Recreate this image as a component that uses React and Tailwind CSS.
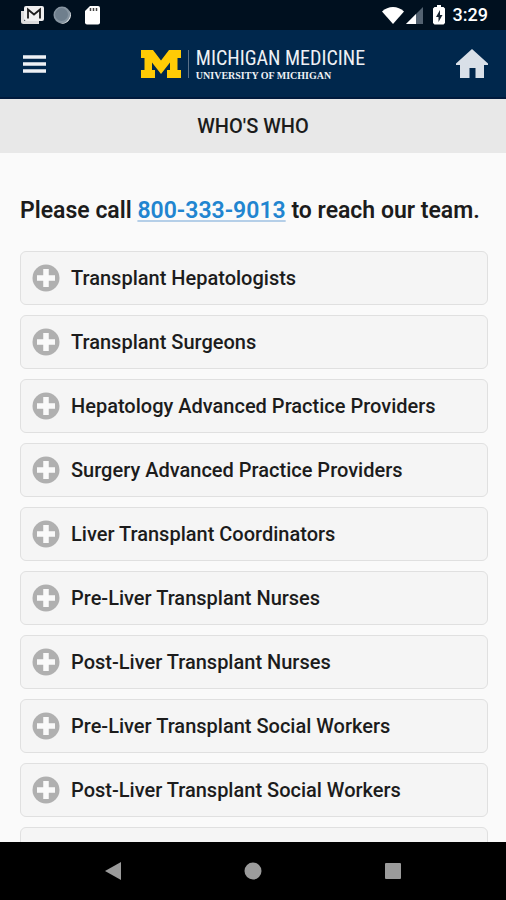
import React from 'react';

const teams = [
  'Transplant Hepatologists',
  'Transplant Surgeons',
  'Hepatology Advanced Practice Providers',
  'Surgery Advanced Practice Providers',
  'Liver Transplant Coordinators',
  'Pre-Liver Transplant Nurses',
  'Post-Liver Transplant Nurses',
  'Pre-Liver Transplant Social Workers',
  'Post-Liver Transplant Social Workers',
  '',
];

const StatusBar = () => (
  <div className="flex h-[30px] shrink-0 items-center justify-between bg-[#00101f] pr-[18px] pl-5">
    <div className="flex items-center">
      <svg className="h-5 w-6" viewBox="0 0 24 20" aria-hidden="true">
        <path d="M1 6h3v10h15v3H3.500a2.500 2.500 0 0 1-2.500-2.500z" fill="#dcdcdc" />
        <rect x="4" y="1" width="20" height="15" rx="2" fill="#efefef" />
        <path d="M8 13.500V4.500l6 5 6-5v9" fill="none" stroke="#1c1c1c" strokeWidth="1.800" />
      </svg>
      <svg className="ml-2 h-5 w-5" viewBox="0 0 20 20" aria-hidden="true">
        <circle cx="10" cy="10" r="8.500" fill="#8795a1" />
        <path d="M17 5a8.500 8.500 0 0 1-10 13 9 9 0 0 0 10-13z" fill="#e4e8ea" />
        <circle cx="9.500" cy="9.500" r="6.500" fill="#6f7f8d" />
      </svg>
      <svg className="ml-3 h-5 w-4" viewBox="0 0 16 20" aria-hidden="true">
        <path d="M6 1h8a2 2 0 0 1 2 2v14.500a2 2 0 0 1-2 2H3a2 2 0 0 1-2-2V6z" fill="#fff" />
        <path d="M6.500 3v3M9.500 3v3M12.500 3v3" stroke="#444" strokeWidth="1.500" />
      </svg>
    </div>
    <div className="flex items-center">
      <svg className="h-5 w-6" viewBox="0 0 24 20" aria-hidden="true">
        <path d="M12 19L1 6.500C4 3.500 8 2 12 2s8 1.500 11 4.500z" fill="#fff" />
      </svg>
      <svg className="h-5 w-5" viewBox="0 0 20 20" aria-hidden="true">
        <path d="M1 19L18 2v17z" fill="#536271" />
        <path d="M1 19L11 9v10z" fill="#fff" />
      </svg>
      <svg className="ml-2 h-5 w-3" viewBox="0 0 12 20" aria-hidden="true">
        <path d="M4 0h4v2h2.500L12 3.500V18l-1.500 1.500h-9L0 18V3.500L1.500 2H4z" fill="#fff" />
        <path d="M7 5L3 12h2.500v5l4-7H7z" fill="#172432" />
      </svg>
      <span className="ml-2 text-lg font-medium text-white">3:29</span>
    </div>
  </div>
);

const Header = () => (
  <header className="flex h-[69px] shrink-0 items-center justify-between border-b-2 border-[#001a3c] bg-[#00274c] pr-4 pl-5">
    <button type="button" aria-label="Menu" className="flex h-8 w-8 items-center">
      <svg className="h-6 w-7" viewBox="0 0 28 24" aria-hidden="true">
        <path d="M3 5h23M3 12h23M3 19h23" stroke="#eef1f5" strokeWidth="3.500" />
      </svg>
    </button>
    <div className="flex items-center">
      <svg className="h-7 w-10" viewBox="0 0 40 28" aria-hidden="true">
        <path
          d="M0 0h12l8 10.500L28 0h12v8h-3.500v12H40v8H26v-8h3v-7.500L20 24l-9-11.500V20h3v8H0v-8h3.500V8H0z"
          fill="#ffcb05"
        />
      </svg>
      <div className="mx-[7px] h-7 w-px bg-[#5a7189]" />
      <div className="flex flex-col text-[#eef1f5]">
        <span className="font-['Roboto_Condensed','Roboto',sans-serif] text-xl leading-6">
          MICHIGAN MEDICINE
        </span>
        <span className="font-['Liberation_Serif',serif] text-[10px] leading-3 font-bold">
          UNIVERSITY OF MICHIGAN
        </span>
      </div>
    </div>
    <a href="#home" aria-label="Home">
      <svg className="h-8 w-9" viewBox="0 0 36 32" aria-hidden="true">
        <path d="M18 1l16 14.500V17h-4v13h-8.500V20h-6v10H6V17H2v-1.500z" fill="#d9e0e8" />
      </svg>
    </a>
  </header>
);

const PlusIcon = () => (
  <svg className="h-7 w-7 shrink-0" viewBox="0 0 28 28" aria-hidden="true">
    <circle cx="14" cy="14" r="13.500" fill="#b0b0b0" />
    <path d="M14 5v18M5 14h18" stroke="#fafafa" strokeWidth="5.500" />
  </svg>
);

const AndroidNav = () => (
  <nav className="flex h-[58px] shrink-0 items-center justify-center gap-[116px] bg-black">
    <button type="button" aria-label="Back">
      <svg className="h-6 w-6" viewBox="0 0 24 24" aria-hidden="true">
        <path d="M4 12L20 3v18z" fill="#9b9b9b" />
      </svg>
    </button>
    <button type="button" aria-label="Home screen">
      <svg className="h-6 w-6" viewBox="0 0 24 24" aria-hidden="true">
        <circle cx="12" cy="12" r="8.500" fill="#9b9b9b" />
      </svg>
    </button>
    <button type="button" aria-label="Recent apps">
      <svg className="h-6 w-6" viewBox="0 0 24 24" aria-hidden="true">
        <rect x="4" y="4" width="16" height="16" rx="1" fill="#9b9b9b" />
      </svg>
    </button>
  </nav>
);

const App = () => (
  <div className="flex h-screen flex-col bg-[#fafafa] font-['Roboto',sans-serif] text-[#1c1c1c]">
    <StatusBar />
    <Header />
    <h1 className="flex h-[54px] shrink-0 items-center justify-center bg-[#e8e8e8] text-xl font-medium">
      WHO'S WHO
    </h1>
    <main className="min-h-0 flex-1 overflow-hidden pt-[42px] pr-[18px] pl-5">
      <h2 className="text-[23px] leading-8 font-semibold whitespace-nowrap">
        Please call{' '}
        <a
          href="tel:800-333-9013"
          className="text-[#2185d0] underline decoration-[#b5cfe8] decoration-2 underline-offset-2"
        >
          800-333-9013
        </a>{' '}
        to reach our team.
      </h2>
      <div className="mt-6 flex flex-col gap-[10px]">
        {teams.map((team, i) => (
          <button
            key={i}
            type="button"
            aria-label={team || 'More'}
            className="flex h-[54px] shrink-0 items-center gap-[11px] rounded-md border border-[#e0e0e0] bg-[#f5f5f5] px-[11px] text-left text-xl font-medium"
          >
            {team && <PlusIcon />}
            {team}
          </button>
        ))}
      </div>
    </main>
    <AndroidNav />
  </div>
);

export default App;
